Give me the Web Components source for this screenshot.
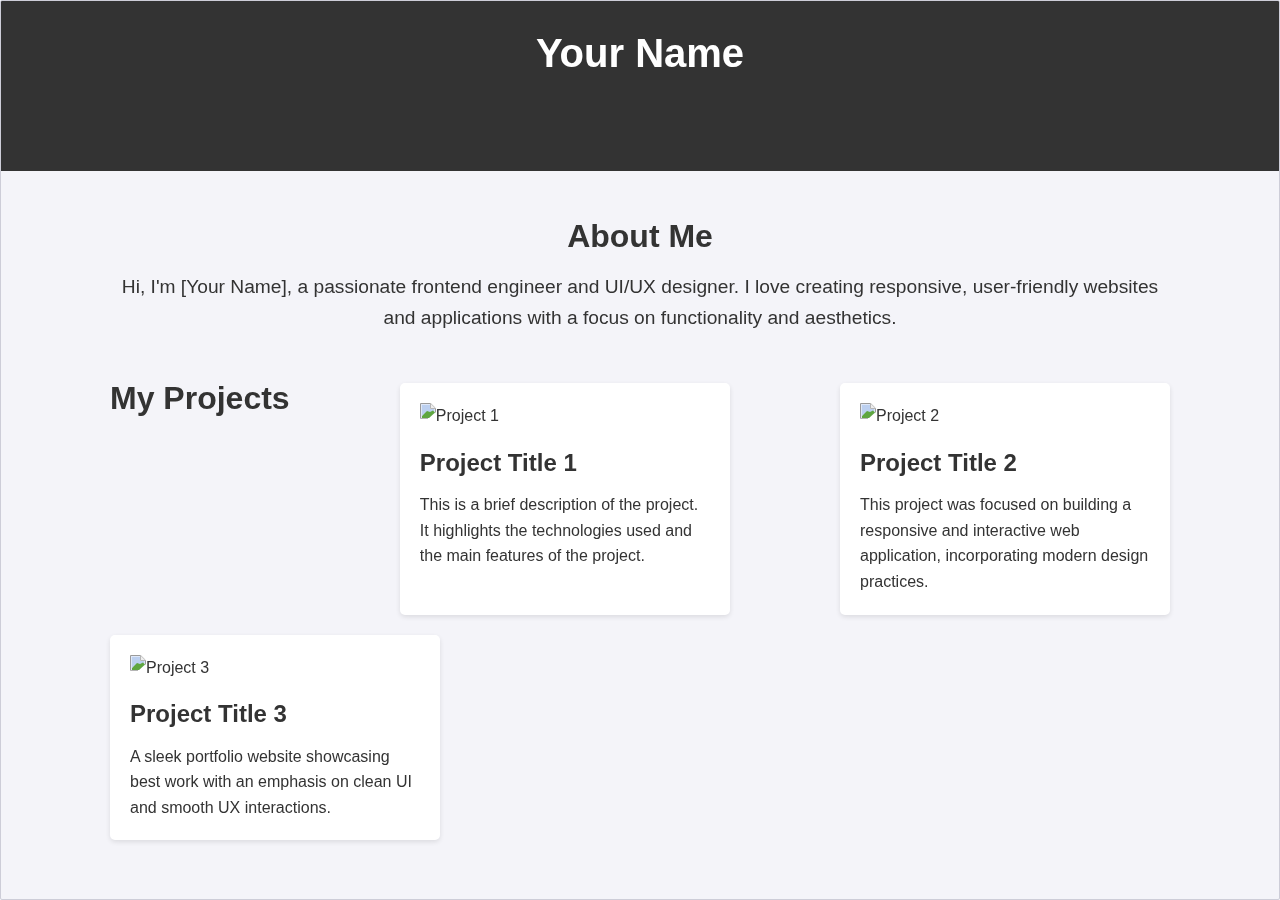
<!DOCTYPE html>
<html lang="en">
<head>
<meta charset="utf-8">
<title>Your Name</title>
<style>
html,body{margin:0;padding:0;background:#f4f4f9;}
body{font-family:"Liberation Sans",Arial,sans-serif;color:#333;line-height:1.6;}
</style>
</head>
<body>
<pf-page>
  <pf-header>Your Name</pf-header>
  <pf-main>
    <pf-about heading="About Me">Hi, I'm [Your Name], a passionate frontend engineer and UI/UX designer. I love creating responsive, user-friendly websites and applications with a focus on functionality and aesthetics.</pf-about>
    <pf-projects heading="My Projects">
      <pf-card alt="Project 1" heading="Project Title 1">This is a brief description of the project. It highlights the technologies used and the main features of the project.</pf-card>
      <pf-card alt="Project 2" heading="Project Title 2">This project was focused on building a responsive and interactive web application, incorporating modern design practices.</pf-card>
      <pf-card alt="Project 3" heading="Project Title 3">A sleek portfolio website showcasing best work with an emphasis on clean UI and smooth UX interactions.</pf-card>
    </pf-projects>
  </pf-main>
</pf-page>
<script>
function define(name, html, setup){
  customElements.define(name, class extends HTMLElement{
    constructor(){
      super();
      this.attachShadow({mode:'open'});
    }
    connectedCallback(){
      const tpl=document.createElement('template');
      tpl.innerHTML=html;
      this.shadowRoot.replaceChildren(tpl.content.cloneNode(true));
      if(setup) setup(this,this.shadowRoot);
    }
  });
}
define('pf-page',`<style>
:host{display:block;box-sizing:border-box;height:900px;border:1px solid #cdcdd8;border-radius:2px;overflow:hidden;will-change:transform;}
</style><slot></slot>`);
define('pf-header',`<style>
:host{display:block;background:#333;color:#fff;text-align:center;padding:20px 20px 0;height:170px;box-sizing:border-box;}
h1{margin:0;font-size:40px;line-height:64px;font-weight:700;}
</style><h1><slot></slot></h1>`);
define('pf-main',`<style>
:host{display:block;width:1060px;margin:0 auto;padding-top:40px;}
</style><slot></slot>`);
define('pf-about',`<style>
:host{display:block;text-align:center;margin-bottom:39.5px;}
h2{margin:0 0 10px;font-size:32px;line-height:51.2px;font-weight:700;}
p{margin:0;font-size:19.2px;line-height:30.72px;}
</style><h2></h2><p><slot></slot></p>`,(el,r)=>{r.querySelector('h2').textContent=el.getAttribute('heading');});
define('pf-projects',`<style>
:host{display:flex;flex-wrap:wrap;justify-content:space-between;align-items:stretch;}
h2{margin:0;font-size:32px;line-height:51.2px;font-weight:700;}
</style><h2></h2><slot></slot>`,(el,r)=>{r.querySelector('h2').textContent=el.getAttribute('heading');});
define('broken-image',`<style>
:host{display:inline;}
svg{width:16px;height:16px;vertical-align:2px;}
</style><svg viewBox="0 0 16 16" aria-hidden="true">
<path d="M1 1H10.5V5.5H15V10L9 15H1Z" fill="#dfe8f8"/>
<path d="M2 2H10V6H14V8L3 12H2Z" fill="#bcd0f0"/>
<path d="M2 13 7 8 10 9 13 7.5 15 9.5 9 15H2Z" fill="#5fa640"/>
<path d="M.5 15.5V.5H10.7L15.5 5.3V9.5" fill="none" stroke="#9a9a9a"/>
<path d="M10.5 .5V5.5H15.5" fill="#eee" stroke="#b5b5b5"/>
<path d="M.5 15.5H8" fill="none" stroke="#b5b5b5"/>
</svg><span></span>`,(el,r)=>{r.querySelector('span').textContent=el.getAttribute('alt');});
define('pf-card',`<style>
:host{display:block;box-sizing:border-box;width:330px;margin:10px 0;padding:20px;background:#fff;border-radius:5px;box-shadow:0 2px 5px rgba(0,0,0,.1);font-size:16px;line-height:25.6px;}
.img{display:block;height:25.6px;margin-bottom:15px;white-space:nowrap;}
h3{margin:0 0 10px;font-size:24px;line-height:38.4px;font-weight:700;}
p{margin:0;}
</style><div class="img"><broken-image></broken-image></div><h3></h3><p><slot></slot></p>`,(el,r)=>{
  const b=r.querySelector('broken-image');
  b.setAttribute('alt',el.getAttribute('alt'));
  b.shadowRoot.querySelector('span').textContent=el.getAttribute('alt');
  r.querySelector('h3').textContent=el.getAttribute('heading');
});
</script>
</body>
</html>
